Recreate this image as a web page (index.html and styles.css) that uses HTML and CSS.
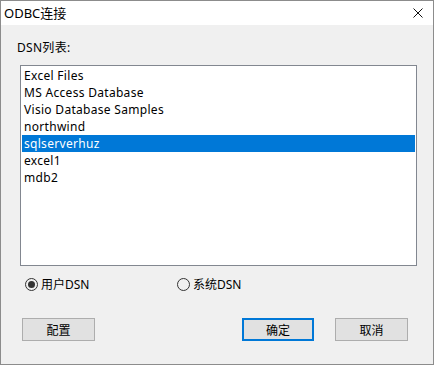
FILE: index.html
```html
<!DOCTYPE html>
<html lang="zh-CN">
<head>
  <meta charset="UTF-8" />
  <title>ODBC连接</title>
  <link rel="stylesheet" href="styles.css">
</head>
<body>
  <div class="dialog">
    <div class="titlebar">
      <span class="title">ODBC连接</span>
      <svg class="close" width="10" height="10" viewBox="0 0 10 10">
        <path d="M0.5 0.5 L9.5 9.5 M9.5 0.5 L0.5 9.5" stroke="#111" stroke-width="1" fill="none" />
      </svg>
    </div>
    <div class="content">
      <div class="label">DSN列表:</div>
      <ul class="dsn-list">
        <li>Excel Files</li>
        <li>MS Access Database</li>
        <li>Visio Database Samples</li>
        <li>northwind</li>
        <li class="selected">sqlserverhuz</li>
        <li>excel1</li>
        <li>mdb2</li>
      </ul>
      <div class="radios">
        <label class="radio"><span class="circle checked"></span>用户DSN</label>
        <label class="radio"><span class="circle"></span>系统DSN</label>
      </div>
      <div class="buttons">
        <button class="btn">配置</button>
        <div class="spacer"></div>
        <button class="btn default">确定</button>
        <button class="btn">取消</button>
      </div>
    </div>
  </div>
</body>
</html>
```

FILE: styles.css
```css
body {
  margin: 0;
  font-family: "Noto Sans", "Noto Sans CJK SC", sans-serif;
  font-size: 12px;
  color: #000;
}

.dialog {
  width: 434px;
  height: 365px;
  box-sizing: border-box;
  border: 1px solid #8c8c8c;
  background: #f0f0f0;
  display: flex;
  flex-direction: column;
}

.titlebar {
  height: 24px;
  background: #fff;
  display: flex;
  align-items: center;
  justify-content: space-between;
  padding-left: 3px;
  padding-right: 10px;
}

.title {
  font-size: 13px;
  line-height: 16px;
}

.content {
  padding: 15px 15px 0 16px;
}

.label {
  line-height: 16px;
  letter-spacing: 0.3px;
}

.dsn-list {
  list-style: none;
  margin: 9px 0 0 3px;
  padding: 1px;
  width: 397px;
  height: 201px;
  box-sizing: border-box;
  background: #fff;
  border: 1px solid #828790;
}

.dsn-list li {
  height: 17px;
  line-height: 17px;
  padding-left: 2px;
  letter-spacing: 0.3px;
}

.dsn-list li.selected {
  background: #0078d7;
  color: #fff;
}

.radios {
  display: flex;
  margin: 10px 0 0 8px;
  height: 16px;
}

.radio {
  width: 152px;
  display: flex;
  align-items: center;
  gap: 3px;
}

.circle {
  width: 13px;
  height: 13px;
  box-sizing: border-box;
  border: 1px solid #333;
  border-radius: 50%;
  display: flex;
  align-items: center;
  justify-content: center;
}

.circle.checked::after {
  content: "";
  width: 7px;
  height: 7px;
  border-radius: 50%;
  background: #333;
}

.buttons {
  display: flex;
  margin: 26px 0 0 5px;
  width: 386px;
}

.spacer {
  flex: 1;
}

.btn {
  width: 73px;
  height: 23px;
  box-sizing: border-box;
  background: #e1e1e1;
  border: 1px solid #adadad;
  font: inherit;
  padding: 0;
}

.btn.default {
  border: 2px solid #0078d7;
  width: 72px;
  margin-right: 21px;
}
```
